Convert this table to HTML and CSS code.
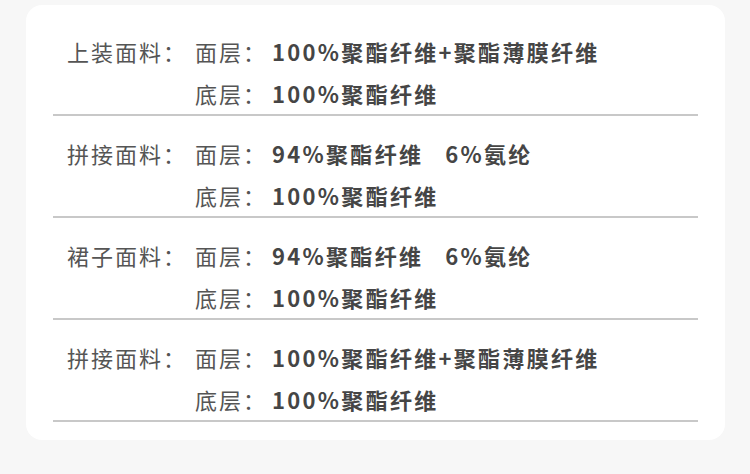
FILE: index.html
```html
<!DOCTYPE html>
<html lang="zh">
<head>
<meta charset="utf-8">
<link rel="stylesheet" href="styles.css">
</head>
<body>
<div class="card">
  <div class="group">
    <div class="label">上装面料：</div>
    <div class="sub">面层：</div>
    <div class="value">100%聚酯纤维+聚酯薄膜纤维</div>
    <div class="label"></div>
    <div class="sub">底层：</div>
    <div class="value">100%聚酯纤维</div>
  </div>
  <div class="group">
    <div class="label">拼接面料：</div>
    <div class="sub">面层：</div>
    <div class="value">94%聚酯纤维&nbsp;&nbsp;&nbsp;6%氨纶</div>
    <div class="label"></div>
    <div class="sub">底层：</div>
    <div class="value">100%聚酯纤维</div>
  </div>
  <div class="group">
    <div class="label">裙子面料：</div>
    <div class="sub">面层：</div>
    <div class="value">94%聚酯纤维&nbsp;&nbsp;&nbsp;6%氨纶</div>
    <div class="label"></div>
    <div class="sub">底层：</div>
    <div class="value">100%聚酯纤维</div>
  </div>
  <div class="group">
    <div class="label">拼接面料：</div>
    <div class="sub">面层：</div>
    <div class="value">100%聚酯纤维+聚酯薄膜纤维</div>
    <div class="label"></div>
    <div class="sub">底层：</div>
    <div class="value">100%聚酯纤维</div>
  </div>
</div>
</body>
</html>
```
FILE: styles.css
```css
html, body {
  margin: 0;
  padding: 0;
  background: #f7f7f7;
}
body {
  padding: 5px 25px 0 26px;
  font-family: "Noto Sans CJK SC", "Noto Sans", sans-serif;
  color: #4a4a4a;
}
.card {
  width: 699px;
  height: 435px;
  box-sizing: border-box;
  background: #ffffff;
  border-radius: 16px;
  padding: 25px 27px 0 27px;
}
.group {
  display: grid;
  grid-template-columns: 128px 77px 1fr;
  grid-auto-rows: 42px;
  align-items: center;
  padding-left: 14px;
  border-bottom: 2px solid #c8c8c8;
}
.group + .group {
  padding-top: 16px;
}
.label, .sub {
  font-size: 22px;
  letter-spacing: 2px;
  color: #555555;
  white-space: nowrap;
}
.value {
  font-size: 22px;
  font-weight: 700;
  letter-spacing: 2.3px;
  color: #454545;
  white-space: pre;
}
```
